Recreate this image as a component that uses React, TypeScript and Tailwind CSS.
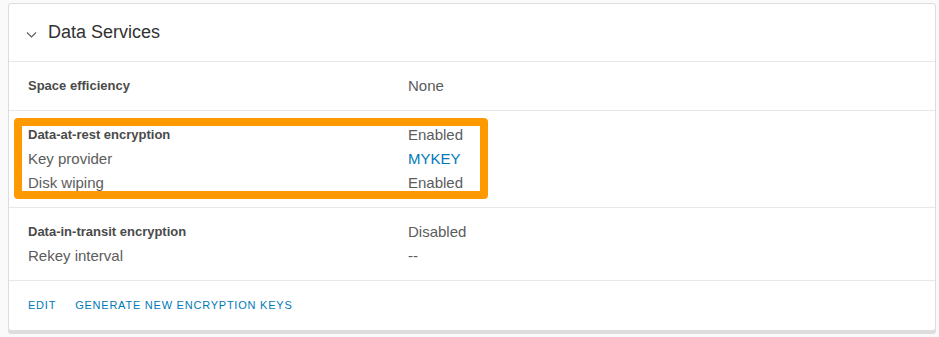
import React from 'react';

interface Row {
  label: string;
  value: string;
  strong?: boolean;
  link?: boolean;
}

const sections: Row[][] = [
  [{ label: 'Space efficiency', value: 'None', strong: true }],
  [
    { label: 'Data-at-rest encryption', value: 'Enabled', strong: true },
    { label: 'Key provider', value: 'MYKEY', link: true },
    { label: 'Disk wiping', value: 'Enabled' },
  ],
  [
    { label: 'Data-in-transit encryption', value: 'Disabled', strong: true },
    { label: 'Rekey interval', value: '--' },
  ],
];

function Chevron() {
  return (
    <svg width="11" height="7" viewBox="0 0 11 7" fill="none" className="mt-[3px]">
      <path d="M1 1.5l4.5 4.5 4.5-4.5" stroke="#5a5a5a" strokeWidth="1.1" />
    </svg>
  );
}

export default function App() {
  return (
    <div
      className="min-h-[337px] w-[939px] bg-[#fafafa] pl-[8px] pt-[3px] pr-[3px]"
      style={{ fontFamily: '"Liberation Sans", Arial, sans-serif' }}
    >
      <div className="relative rounded-[3px] border border-[#dddddd] bg-white shadow-[0_3px_0_0_#dddddd]">
        <div className="flex h-[58px] items-center gap-[11px] border-b border-[#e8e8e8] pl-[17px]">
          <Chevron />
          <span className="text-[18px] text-[#313131]">Data Services</span>
        </div>

        {sections.map((rows, i) => (
          <div key={i} className="border-b border-[#e8e8e8] py-[12px] pl-[19px]">
            {rows.map((r) => (
              <div key={r.label} className="flex h-[24px] items-center">
                <div
                  className={
                    r.strong
                      ? 'w-[380px] text-[13px] font-bold text-[#4a4a4a]'
                      : 'w-[380px] text-[15px] text-[#5c5c5c]'
                  }
                >
                  {r.label}
                </div>
                <div className={r.link ? 'text-[15px] text-[#0079b8]' : 'text-[15px] text-[#5c5c5c]'}>
                  {r.value}
                </div>
              </div>
            ))}
          </div>
        ))}

        <div className="flex h-[49px] items-center gap-[19px] pl-[19px] text-[11px] tracking-[0.07em] text-[#0079b8]">
          <span>EDIT</span>
          <span>GENERATE NEW ENCRYPTION KEYS</span>
        </div>

        {/* highlight annotation */}
        <div className="pointer-events-none absolute left-[5px] top-[114px] h-[81px] w-[474px] rounded-[4px] border-[8px] border-[#ff9900]" />
      </div>
    </div>
  );
}
